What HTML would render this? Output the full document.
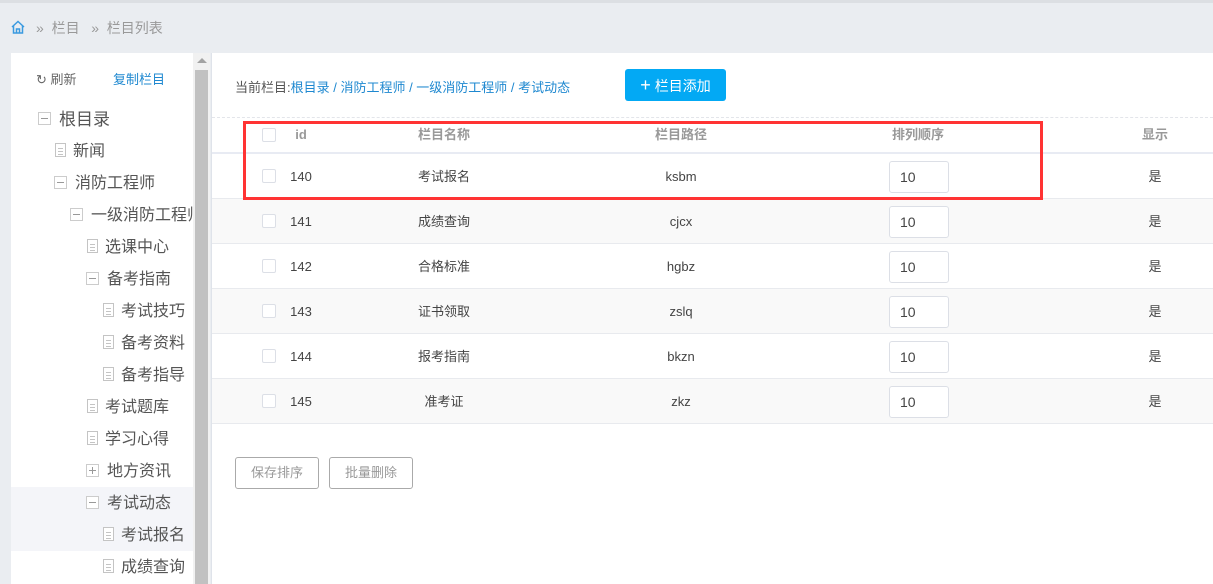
<!DOCTYPE html>
<html><head><meta charset="utf-8"><style>
*{margin:0;padding:0;box-sizing:border-box}
body{width:1213px;height:584px;overflow:hidden;background:#eaedf1;font-family:"Liberation Sans","Noto Sans CJK SC",sans-serif;position:relative}
.abs{position:absolute}
.crumb{top:18px;font-size:14px;color:#999}
.left{left:11px;top:53px;width:182px;height:531px;background:#fff}
.track{left:193px;top:53px;width:17px;height:531px;background:#f1f1f1}
.thumb{left:195px;top:70px;width:13px;height:514px;background:#c1c1c1}
.main{left:211px;top:53px;width:1002px;height:531px;background:#fff;border-left:1px solid #dfe3ea}
.ti{position:absolute;font-size:16px;color:#555;white-space:nowrap;line-height:20px}
.tg{position:absolute;width:13px;height:13px;border:1px solid #ccc;background:#fff}
.tg:after{content:"";position:absolute;left:2px;top:5px;width:7px;height:1px;background:#999}
.tg.p:before{content:"";position:absolute;left:5px;top:2px;width:1px;height:7px;background:#999}
.doc{position:absolute;width:11px;height:14px;border:1px solid #c4c4c4;background:#fff}
.doc i{position:absolute;left:2px;width:5px;height:1px;background:#c4c4c4}
.row{position:absolute;left:212px;width:1001px;height:45px;border-bottom:1px solid #e8eaee;font-size:13px;color:#444;line-height:45px}
.row span{position:absolute;top:0;transform:translateX(-50%);white-space:nowrap}
.cb{position:absolute;width:14px;height:14px;border:1px solid #dcdfe6;border-radius:2px;background:#fff}
.inp{position:absolute;left:677px;top:7px;width:60px;height:32px;border:1px solid #dcdfe6;border-radius:3px;font-size:14px;line-height:30px;padding-left:10px;color:#444;background:#fff}
.btn{position:absolute;top:457px;width:84px;height:32px;border:1px solid #aaa;border-radius:3px;font-size:13px;color:#999;text-align:center;line-height:30px}
</style></head><body>
<div class="abs" style="left:0;top:0;width:1213px;height:3px;background:#dcdfe3"></div>
<svg class="abs" style="left:10px;top:19px" width="16" height="16" viewBox="0 0 16 16"><path d="M2 8 L8 2.5 L14 8 M3.5 7 V14 H12.5 V7 M6.5 14 V10 H9.5 V14" fill="none" stroke="#3a9ae0" stroke-width="1.5"/></svg>
<div class="abs crumb" style="left:36px">»&nbsp;&nbsp;栏目&nbsp;&nbsp;&nbsp;»&nbsp;&nbsp;栏目列表</div>
<div class="abs left"></div>
<div class="abs" style="left:11px;top:487px;width:182px;height:64px;background:#f4f5f9"></div>
<div class="abs track"></div><div class="abs thumb"></div>
<div class="abs" style="left:197px;top:58px;width:0;height:0;border-left:5px solid transparent;border-right:5px solid transparent;border-bottom:5px solid #a3a3a3"></div>
<div class="abs" style="left:36px;top:69px;font-size:13px;color:#666">↻ 刷新</div>
<div class="abs" style="left:113px;top:69px;font-size:13px;color:#1e88d0">复制栏目</div>

<div class="tg" style="left:38px;top:112px"></div><div class="ti" style="left:59px;top:110px;font-size:17px">根目录</div>
<div class="doc" style="left:55px;top:143px"><i style="top:4px"></i><i style="top:7px"></i><i style="top:10px"></i></div><div class="ti" style="left:73px;top:142px">新闻</div>
<div class="tg" style="left:54px;top:176px"></div><div class="ti" style="left:75px;top:174px">消防工程师</div>
<div class="tg" style="left:70px;top:208px"></div><div class="ti" style="left:91px;top:206px;width:102px;overflow:hidden">一级消防工程师</div>
<div class="doc" style="left:87px;top:239px"><i style="top:4px"></i><i style="top:7px"></i><i style="top:10px"></i></div><div class="ti" style="left:105px;top:238px">选课中心</div>
<div class="tg" style="left:86px;top:272px"></div><div class="ti" style="left:107px;top:270px">备考指南</div>
<div class="doc" style="left:103px;top:303px"><i style="top:4px"></i><i style="top:7px"></i><i style="top:10px"></i></div><div class="ti" style="left:121px;top:302px">考试技巧</div>
<div class="doc" style="left:103px;top:335px"><i style="top:4px"></i><i style="top:7px"></i><i style="top:10px"></i></div><div class="ti" style="left:121px;top:334px">备考资料</div>
<div class="doc" style="left:103px;top:367px"><i style="top:4px"></i><i style="top:7px"></i><i style="top:10px"></i></div><div class="ti" style="left:121px;top:366px">备考指导</div>
<div class="doc" style="left:87px;top:399px"><i style="top:4px"></i><i style="top:7px"></i><i style="top:10px"></i></div><div class="ti" style="left:105px;top:398px">考试题库</div>
<div class="doc" style="left:87px;top:431px"><i style="top:4px"></i><i style="top:7px"></i><i style="top:10px"></i></div><div class="ti" style="left:105px;top:430px">学习心得</div>
<div class="tg p" style="left:86px;top:464px"></div><div class="ti" style="left:107px;top:462px">地方资讯</div>
<div class="tg" style="left:86px;top:496px"></div><div class="ti" style="left:107px;top:494px">考试动态</div>
<div class="doc" style="left:103px;top:527px"><i style="top:4px"></i><i style="top:7px"></i><i style="top:10px"></i></div><div class="ti" style="left:121px;top:526px">考试报名</div>
<div class="doc" style="left:103px;top:559px"><i style="top:4px"></i><i style="top:7px"></i><i style="top:10px"></i></div><div class="ti" style="left:121px;top:558px">成绩查询</div>

<div class="abs main"></div>
<div class="abs" style="left:235px;top:77px;font-size:13px;color:#555;white-space:nowrap">当前栏目:<span style="color:#1e88d0">根目录 / 消防工程师 / 一级消防工程师 / 考试动态</span></div>
<div class="abs" style="left:625px;top:69px;width:101px;height:32px;background:#03a9f4;border-radius:3px;color:#fff;font-size:14px;line-height:32px;text-align:center"><b style="font-size:18px;font-weight:normal">+</b> 栏目添加</div>
<div class="abs" style="left:212px;top:117px;width:1001px;border-top:1px dashed #e3e5ea"></div>
<div class="row" style="top:118px;height:36px;line-height:34px;border-bottom:2px solid #e8ebf3;color:#999;font-weight:bold">
<div class="cb" style="left:50px;top:10px"></div>
<span style="left:89px">id</span><span style="left:232px">栏目名称</span><span style="left:469px">栏目路径</span><span style="left:706px">排列顺序</span><span style="left:943px">显示</span></div>

<div class="row" style="top:154px;background:#fff"><div class="cb" style="left:50px;top:15px"></div><span style="left:89px">140</span><span style="left:232px">考试报名</span><span style="left:469px">ksbm</span><div class="inp">10</div><span style="left:943px">是</span></div>
<div class="row" style="top:199px;background:#f9f9f9"><div class="cb" style="left:50px;top:15px"></div><span style="left:89px">141</span><span style="left:232px">成绩查询</span><span style="left:469px">cjcx</span><div class="inp">10</div><span style="left:943px">是</span></div>
<div class="row" style="top:244px;background:#fff"><div class="cb" style="left:50px;top:15px"></div><span style="left:89px">142</span><span style="left:232px">合格标准</span><span style="left:469px">hgbz</span><div class="inp">10</div><span style="left:943px">是</span></div>
<div class="row" style="top:289px;background:#f9f9f9"><div class="cb" style="left:50px;top:15px"></div><span style="left:89px">143</span><span style="left:232px">证书领取</span><span style="left:469px">zslq</span><div class="inp">10</div><span style="left:943px">是</span></div>
<div class="row" style="top:334px;background:#fff"><div class="cb" style="left:50px;top:15px"></div><span style="left:89px">144</span><span style="left:232px">报考指南</span><span style="left:469px">bkzn</span><div class="inp">10</div><span style="left:943px">是</span></div>
<div class="row" style="top:379px;background:#f9f9f9"><div class="cb" style="left:50px;top:15px"></div><span style="left:89px">145</span><span style="left:232px">准考证</span><span style="left:469px">zkz</span><div class="inp">10</div><span style="left:943px">是</span></div>

<div class="abs" style="left:243px;top:121px;width:800px;height:79px;border:3px solid #f33"></div>
<div class="btn" style="left:235px">保存排序</div>
<div class="btn" style="left:329px">批量删除</div>
</body></html>
